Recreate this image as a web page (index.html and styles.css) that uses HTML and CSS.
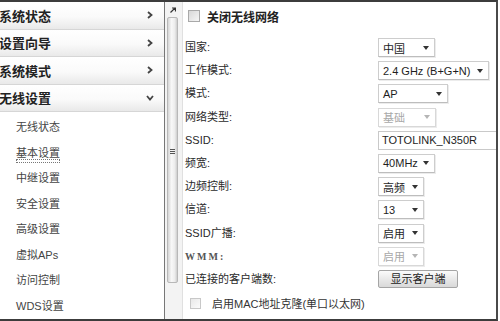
FILE: index.html
```html
<!DOCTYPE html>
<html lang="zh-CN">
  <head>
    <meta charset="UTF-8" />
    <title>无线设置</title>
    <link rel="stylesheet" href="styles.css">
  </head>
  <body>
    <div class="frame">
      <aside class="sidebar">
        <div class="menu-head">
          <span>系统状态</span>
          <svg class="chev" width="6" height="8" viewBox="0 0 6 8"><path d="M1 1l3.5 3L1 7" fill="none" stroke="#444" stroke-width="1.8"/></svg>
        </div>
        <div class="menu-head">
          <span>设置向导</span>
          <svg class="chev" width="6" height="8" viewBox="0 0 6 8"><path d="M1 1l3.5 3L1 7" fill="none" stroke="#444" stroke-width="1.8"/></svg>
        </div>
        <div class="menu-head">
          <span>系统模式</span>
          <svg class="chev" width="6" height="8" viewBox="0 0 6 8"><path d="M1 1l3.5 3L1 7" fill="none" stroke="#444" stroke-width="1.8"/></svg>
        </div>
        <div class="menu-head open">
          <span>无线设置</span>
          <svg class="chev down" width="8" height="6" viewBox="0 0 8 6"><path d="M1 1l3 3.5L7 1" fill="none" stroke="#444" stroke-width="1.8"/></svg>
        </div>
        <ul class="submenu">
          <li>无线状态</li>
          <li><span class="focus">基本设置</span></li>
          <li>中继设置</li>
          <li>安全设置</li>
          <li>高级设置</li>
          <li>虚拟APs</li>
          <li>访问控制</li>
          <li>WDS设置</li>
        </ul>
      </aside>

      <div class="splitter">
        <svg class="corner" width="6" height="6" viewBox="0 0 6 6"><path d="M0.5 5.5L5 1M2 1h3.5v3.5" fill="none" stroke="#333" stroke-width="1.2"/></svg>
        <div class="track">
          <svg width="5" height="5" viewBox="0 0 5 5"><path d="M0 0.5h5M0 2.5h5M0 4.5h5" stroke="#555" stroke-width="1"/></svg>
        </div>
      </div>

      <main class="content">
        <div class="toggle">
          <span class="check"></span>
          <span>关闭无线网络</span>
        </div>

        <div class="form">
          <div class="label">国家:</div>
          <div><span class="select w57">中国<i class="caret"></i></span></div>

          <div class="label">工作模式:</div>
          <div><span class="select w111">2.4 GHz (B+G+N)<i class="caret"></i></span></div>

          <div class="label">模式:</div>
          <div><span class="select w70">AP<i class="caret"></i></span></div>

          <div class="label">网络类型:</div>
          <div><span class="select w58 disabled">基础<i class="caret"></i></span></div>

          <div class="label">SSID:</div>
          <div><span class="input">TOTOLINK_N350R</span></div>

          <div class="label">频宽:</div>
          <div><span class="select w57">40MHz<i class="caret"></i></span></div>

          <div class="label">边频控制:</div>
          <div><span class="select w46">高频<i class="caret"></i></span></div>

          <div class="label">信道:</div>
          <div><span class="select w46">13<i class="caret"></i></span></div>

          <div class="label">SSID广播:</div>
          <div><span class="select w46">启用<i class="caret"></i></span></div>

          <div class="label wmm">WMM:</div>
          <div><span class="select w46 disabled">启用<i class="caret"></i></span></div>

          <div class="label">已连接的客户端数:</div>
          <div><span class="button">显示客户端</span></div>
        </div>

        <div class="clone">
          <span class="check light"></span>
          <span>启用MAC地址克隆(单口以太网)</span>
        </div>
      </main>
    </div>
  </body>
</html>
```

FILE: styles.css
```css
body {
  margin: 0;
  background: #fff;
  font-family: "Liberation Sans", "Noto Sans CJK SC", sans-serif;
  color: #333;
}

.frame {
  display: flex;
  width: 498px;
  height: 321px;
  box-sizing: border-box;
  border-top: 2px solid #3c3c3c;
  border-bottom: 2px solid #3c3c3c;
  border-right: 2px solid #4a4a4a;
  overflow: hidden;
}

/* left menu */
.sidebar {
  width: 164px;
  flex-shrink: 0;
  border-right: 1px solid #777;
  background: #fff;
}

.menu-head {
  display: flex;
  align-items: center;
  justify-content: space-between;
  height: 26.5px;
  padding-right: 11px;
  border-bottom: 1px solid #d6d6d6;
  background: linear-gradient(#fff, #fafafa 55%, #e9e9e9);
  font-size: 13px;
  font-weight: bold;
  color: #222;
}

.menu-head span {
  margin-left: -1px;
}

.chev.down {
  margin-right: -1px;
}

.submenu {
  list-style: none;
  margin: 0;
  padding: 3px 0 0 16px;
  font-size: 11px;
  color: #444;
}

.submenu li {
  height: 25.5px;
  line-height: 25.5px;
}

.focus {
  position: relative;
  display: inline-block;
}

.focus::after {
  content: "";
  position: absolute;
  left: 0;
  right: 0;
  top: 18px;
  height: 2px;
  border: 1px dotted #777;
}

/* splitter between menu and page */
.splitter {
  width: 17px;
  flex-shrink: 0;
  background: #f3f3f3;
  border-right: 1px solid #e0e0e0;
}

.corner {
  display: block;
  margin: 5px 0 0 5px;
}

.track {
  display: flex;
  align-items: center;
  justify-content: center;
  width: 11px;
  height: 266px;
  margin: 4px 0 0 2px;
  box-sizing: border-box;
  border: 1px solid #b8b8b8;
  border-radius: 2px;
  background: linear-gradient(90deg, #d6d6d6, #f8f8f8 40%, #ececec 75%, #cdcdcd);
}

.track svg {
  margin-top: 2px;
}

/* settings page */
.content {
  flex: 1;
  padding-left: 2px;
  overflow: hidden;
  font-size: 11px;
  color: #2a2a2a;
}

.toggle {
  display: flex;
  align-items: center;
  height: 28px;
  margin-left: 3px;
  font-size: 12px;
  font-weight: bold;
  color: #222;
}

.check {
  width: 12px;
  height: 12px;
  box-sizing: border-box;
  margin-right: 7px;
  border: 1px solid #a9a9a9;
  background: linear-gradient(135deg, #d8d8d8, #f6f6f6);
}

.check.light {
  width: 11px;
  height: 11px;
  margin-right: 11px;
  border-color: #c8c8c8;
  background: linear-gradient(135deg, #e8e8e8, #fbfbfb);
}

.form {
  display: grid;
  grid-template-columns: 193px auto;
  grid-auto-rows: 23.2px;
  margin-top: 8px;
}

.label {
  height: 19px;
  line-height: 19px;
}

.wmm {
  font-family: "Liberation Serif", serif;
  font-size: 10px;
  font-weight: bold;
  letter-spacing: 2px;
  color: #555;
}

.select {
  display: flex;
  align-items: center;
  justify-content: space-between;
  height: 19px;
  box-sizing: border-box;
  padding: 0 5px 0 4px;
  border: 1px solid #cdcdcd;
  border-bottom-color: #bdbdbd;
  box-shadow: 1px 1px 0 #ececec;
  background: #fff;
  color: #1e1e1e;
}

.caret {
  width: 0;
  height: 0;
  border-left: 3px solid transparent;
  border-right: 3px solid transparent;
  border-top: 4px solid #333;
}

.select.disabled {
  color: #a8a8a8;
  border-color: #d8d8d8;
}

.select.disabled .caret {
  border-top-color: #b5b5b5;
}

.w46 { width: 46px; }
.w57 { width: 57px; }
.w58 { width: 58px; }
.w70 { width: 70px; }
.w111 { width: 111px; }

.input {
  display: block;
  width: 130px;
  height: 19px;
  line-height: 17px;
  box-sizing: border-box;
  padding-left: 3px;
  border: 1px solid #c9c9c9;
  color: #1e1e1e;
}

.button {
  display: block;
  width: 80px;
  height: 18px;
  line-height: 16px;
  box-sizing: border-box;
  border: 1px solid #a5a5a5;
  border-radius: 2px;
  background: linear-gradient(#fbfbfb, #e9e9e9 50%, #d9d9d9);
  text-align: center;
  color: #222;
}

.clone {
  display: flex;
  align-items: center;
  height: 20px;
  margin-left: 5px;
  color: #333;
}
```
